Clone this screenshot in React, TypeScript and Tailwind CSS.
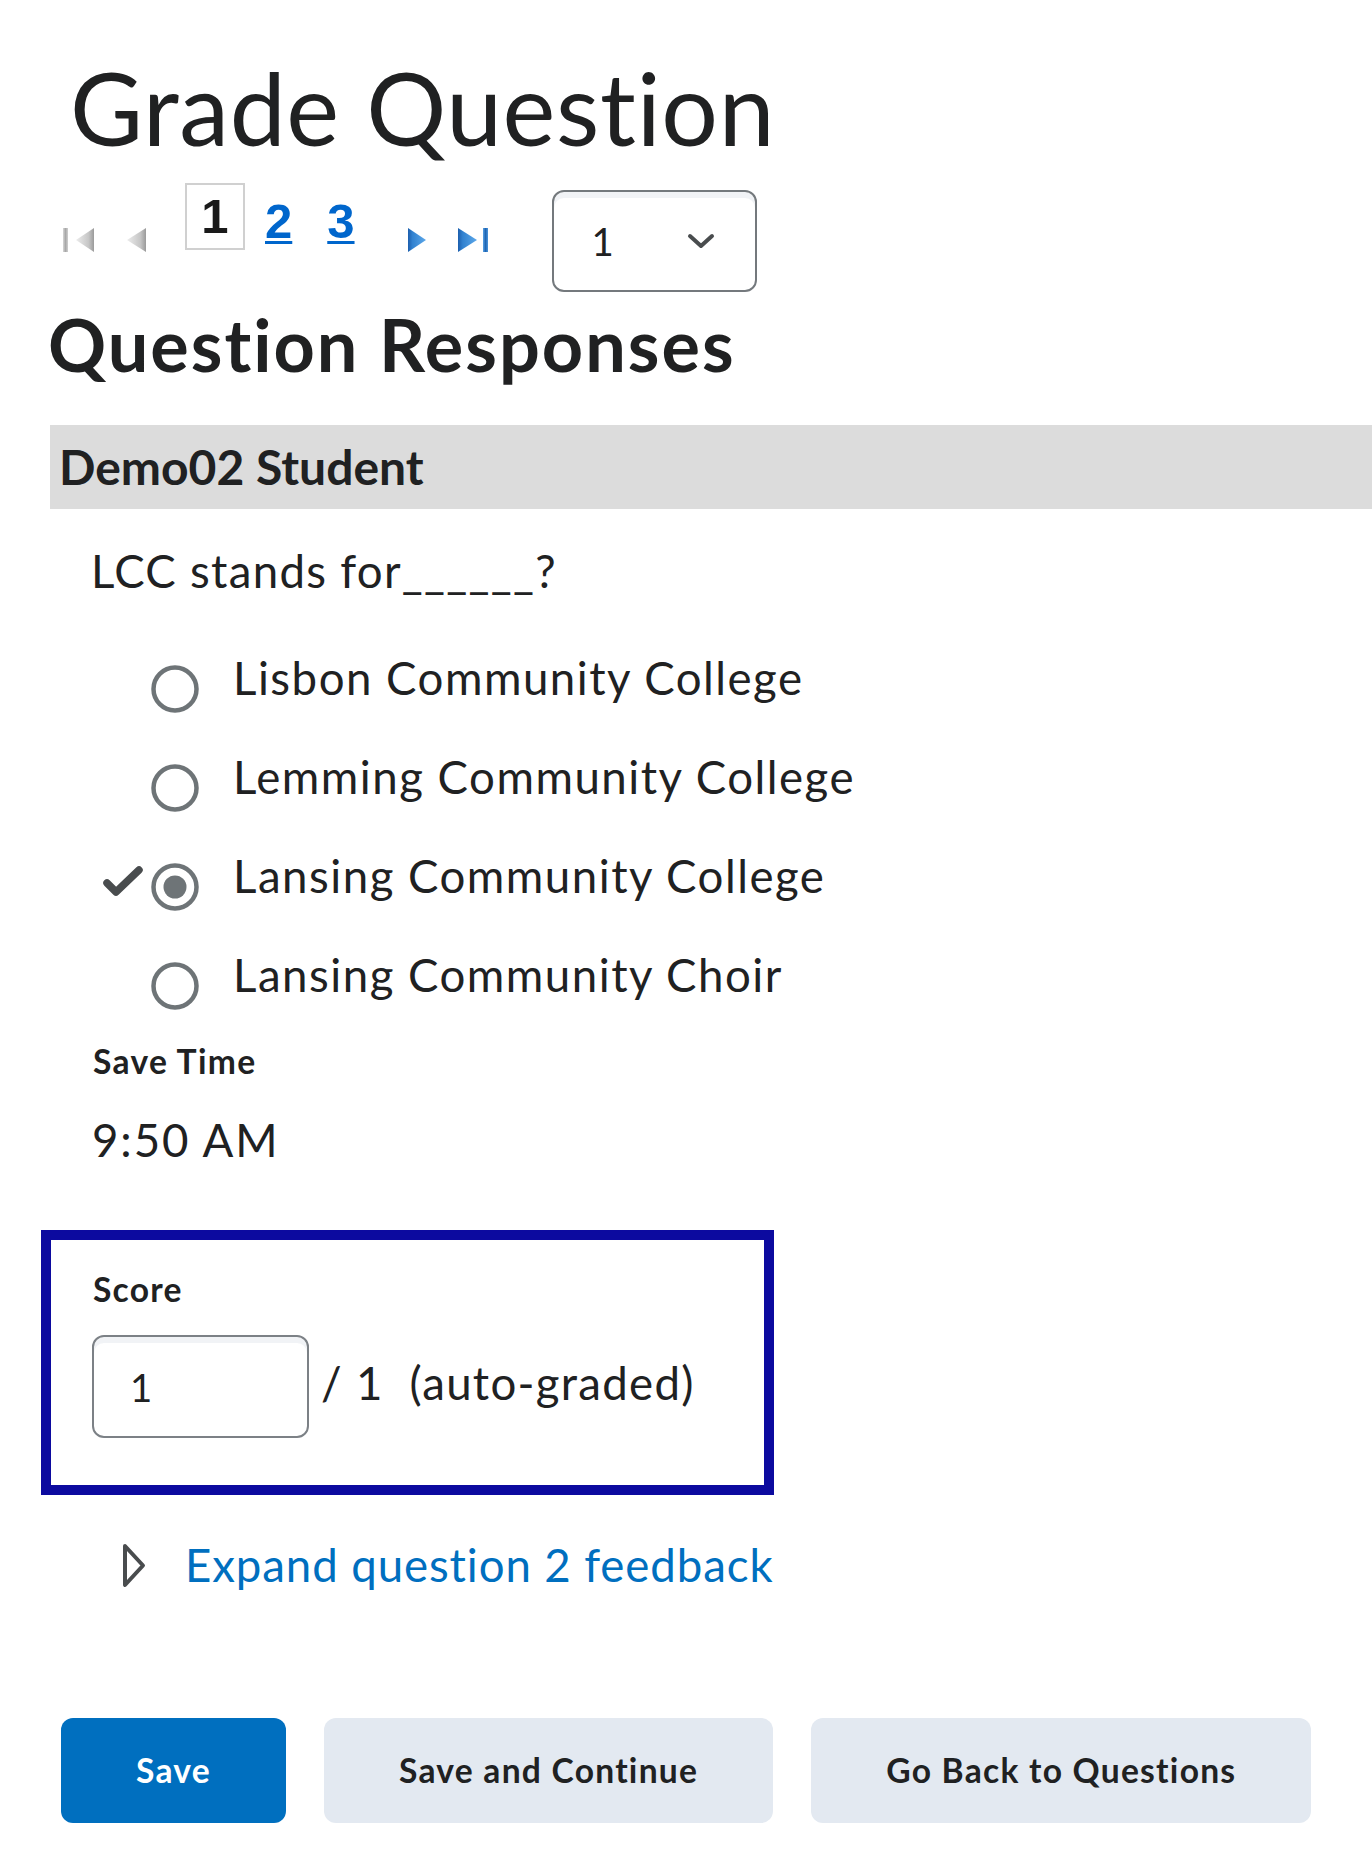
import React from "react";

const lato = { fontFamily: "Lato, 'Noto Sans', sans-serif" };

function GrayGrad({ id }: { id: string }) {
  return (
    <linearGradient id={id} x1="0" x2="1" y1="0" y2="0">
      <stop offset="0" stopColor="#ececec" />
      <stop offset="0.7" stopColor="#c6c6c6" />
      <stop offset="1" stopColor="#9a9a9a" />
    </linearGradient>
  );
}
function BlueGrad({ id }: { id: string }) {
  return (
    <linearGradient id={id} x1="0" x2="1" y1="0" y2="0">
      <stop offset="0" stopColor="#1c5ead" />
      <stop offset="0.25" stopColor="#3282d0" />
      <stop offset="1" stopColor="#5ca8ea" />
    </linearGradient>
  );
}

function FirstIcon() {
  return (
    <svg width="31" height="24" viewBox="0 0 31 24">
      <defs>
        <GrayGrad id="g1" />
        <linearGradient id="g1b" x1="0" x2="1" y1="0" y2="0">
          <stop offset="0" stopColor="#d6d6d6" />
          <stop offset="0.5" stopColor="#a8a8a8" />
          <stop offset="1" stopColor="#cfcfcf" />
        </linearGradient>
      </defs>
      <rect x="0" y="0" width="5" height="24" fill="url(#g1b)" />
      <polygon points="31,0 31,24 13,12" fill="url(#g1)" />
    </svg>
  );
}
function PrevIcon() {
  return (
    <svg width="19" height="24" viewBox="0 0 19 24">
      <defs>
        <GrayGrad id="g2" />
      </defs>
      <polygon points="19,0 19,24 0,12" fill="url(#g2)" />
    </svg>
  );
}
function NextIcon() {
  return (
    <svg width="18" height="24" viewBox="0 0 18 24">
      <defs>
        <BlueGrad id="b1" />
      </defs>
      <polygon points="0,0 0,24 18,12" fill="url(#b1)" />
    </svg>
  );
}
function LastIcon() {
  return (
    <svg width="30" height="24" viewBox="0 0 30 24">
      <defs>
        <BlueGrad id="b2" />
        <linearGradient id="b2b" x1="0" x2="1" y1="0" y2="0">
          <stop offset="0" stopColor="#5aa2e4" />
          <stop offset="0.5" stopColor="#1f66b4" />
          <stop offset="1" stopColor="#4a94da" />
        </linearGradient>
      </defs>
      <polygon points="0,0 0,24 19,12" fill="url(#b2)" />
      <rect x="25" y="0" width="5" height="24" fill="url(#b2b)" />
    </svg>
  );
}

function Radio({ checked }: { checked?: boolean }) {
  return (
    <svg width="48" height="48" viewBox="0 0 48 48" className="shrink-0">
      <circle cx="24" cy="24" r="21.5" fill="white" stroke="#6e7477" strokeWidth="4.5" />
      {checked && <circle cx="24" cy="24" r="11.5" fill="#6e7477" />}
    </svg>
  );
}

function Check() {
  return (
    <svg width="40" height="30" viewBox="0 0 40 30">
      <path d="M4 17 L13 26 L36 4" fill="none" stroke="#494c4e" strokeWidth="7.5" strokeLinecap="round" strokeLinejoin="round" />
    </svg>
  );
}

const options = [
  { label: "Lisbon Community College" },
  { label: "Lemming Community College" },
  { label: "Lansing Community College", checked: true },
  { label: "Lansing Community Choir" },
];

const arial = { fontFamily: "'Liberation Sans', Arial, sans-serif" };

export default function App() {
  return (
    <div className="min-h-screen w-[1372px] bg-white text-[#202122] [font-variant-ligatures:none]" style={lato}>
      <h1 className="ml-[70px] pt-[57px] text-[100px] font-normal leading-none tracking-[0.7px]">Grade Question</h1>

      {/* pager */}
      <div className="mt-[26px] flex items-start pl-[63px]">
        <div className="mt-[45px] flex"><FirstIcon /></div>
        <div className="ml-[33px] mt-[45px] flex"><PrevIcon /></div>
        <div
          className="ml-[39px] flex h-[67px] w-[60px] items-center justify-center border-2 border-[#d0d0d0] text-[49px] font-bold leading-none text-[#1a1a1a]"
          style={arial}
        >
          1
        </div>
        <a
          className="ml-[20px] mt-[14px] text-[49px] font-bold leading-none text-[#0066cc] underline decoration-[3px] underline-offset-[3px]"
          style={arial}
        >
          2
        </a>
        <a
          className="ml-[35px] mt-[14px] text-[49px] font-bold leading-none text-[#0066cc] underline decoration-[3px] underline-offset-[3px]"
          style={arial}
        >
          3
        </a>
        <div className="ml-[53px] mt-[45px] flex"><NextIcon /></div>
        <div className="ml-[32px] mt-[45px] flex"><LastIcon /></div>
        <div className="ml-[64px] mt-[7px] flex h-[102px] w-[205px] items-center rounded-[12px] border-2 border-[#74797d] bg-white pl-[38px] pr-[40px] shadow-[inset_0_6px_0_0_rgba(185,194,208,0.2)]">
          <span className="text-[38.4px] leading-none">1</span>
          <svg className="ml-auto" width="28" height="16" viewBox="0 0 28 16">
            <path d="M3 3 L14 13 L25 3" fill="none" stroke="#494c4e" strokeWidth="4" strokeLinecap="round" strokeLinejoin="round" />
          </svg>
        </div>
      </div>

      <h2 className="ml-[48px] mt-[16px] text-[72px] font-bold leading-none tracking-[2px]">Question Responses</h2>

      <div className="ml-[50px] mt-[45px] flex h-[84px] items-center bg-[#dcdcdc] pl-[9px]">
        <span className="text-[48px] font-bold leading-none">Demo02 Student</span>
      </div>

      <p className="ml-[91px] mt-[39px] text-[45.6px] leading-none tracking-[1.3px]">LCC stands for______?</p>

      <div className="mt-[34px] flex flex-col pl-[103px]">
        {options.map((o) => (
          <div key={o.label} className="flex h-[99px] items-start">
            <div className="mt-[40px] w-[48px]">{o.checked && <Check />}</div>
            <div className="mt-[37px]"><Radio checked={o.checked} /></div>
            <span className="ml-[34px] text-[45.6px] leading-[99px] tracking-[1.5px]">{o.label}</span>
          </div>
        ))}
      </div>

      <div className="ml-[93px] mt-[21px] text-[33.6px] font-bold leading-none tracking-[1.3px]">Save Time</div>
      <div className="ml-[92px] mt-[39px] text-[45.6px] leading-none tracking-[1.9px]">9:50 AM</div>

      <div className="ml-[41px] mt-[67px] w-[733px] border-[10px] border-[#0c0a9f] pb-[47px] pl-[41px] pt-[33px]">
        <div className="ml-[1px] text-[33.6px] font-bold leading-none tracking-[1.2px]">Score</div>
        <div className="mt-[29px] flex items-center">
          <input
            readOnly
            value="1"
            className="h-[103px] w-[217px] rounded-[12px] border-2 border-[#7c8186] bg-white px-[36px] text-[38.4px] text-[#202122] shadow-[inset_0_6px_0_0_rgba(185,194,208,0.2)] outline-none"
            style={lato}
          />
          <span className="ml-[12px] mt-[-8px] whitespace-pre text-[45.6px] leading-none tracking-[1.3px]">/ 1  (auto-graded)</span>
        </div>
      </div>

      <div className="ml-[122px] mt-[47px] flex items-center">
        <svg width="25" height="45" viewBox="0 0 25 45">
          <path d="M3 3 L21 22.5 L3 42 Z" fill="none" stroke="#494c4e" strokeWidth="4" strokeLinejoin="round" />
        </svg>
        <a className="ml-[38px] text-[45.6px] leading-none tracking-[0.9px] text-[#006fbf]">Expand question 2 feedback</a>
      </div>

      <div className="ml-[61px] mt-[130px] flex gap-[38px]">
        <button className="flex h-[105px] items-center rounded-[12px] bg-[#006fbf] px-[75px] text-[33.6px] font-bold leading-none tracking-[1.25px] text-white" style={lato}>
          Save
        </button>
        <button className="flex h-[105px] items-center rounded-[12px] bg-[#e3e9f1] px-[75px] text-[33.6px] font-bold leading-none tracking-[1.25px] text-[#202122]" style={lato}>
          Save and Continue
        </button>
        <button className="flex h-[105px] items-center rounded-[12px] bg-[#e3e9f1] px-[75px] text-[33.6px] font-bold leading-none tracking-[1.25px] text-[#202122]" style={lato}>
          Go Back to Questions
        </button>
      </div>
    </div>
  );
}
